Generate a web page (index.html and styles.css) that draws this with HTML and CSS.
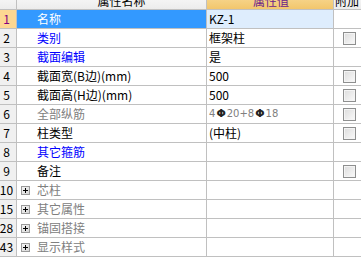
FILE: index.html
```html
<!DOCTYPE html>
<html lang="zh-CN">

<head>
    <meta charset="UTF-8">
    <title>属性编辑</title>
    <link rel="stylesheet" href="styles.css">
</head>

<body>
    <div class="grid">
        <div class="row head">
            <div class="cell num"></div>
            <div class="cell name">属性名称</div>
            <div class="cell value">属性值</div>
            <div class="cell extra">附加</div>
        </div>

        <div class="row current">
            <div class="cell num">1</div>
            <div class="cell name">名称</div>
            <div class="cell value">KZ-1</div>
            <div class="cell extra"></div>
        </div>
        <div class="row">
            <div class="cell num">2</div>
            <div class="cell name blue">类别</div>
            <div class="cell value">框架柱</div>
            <div class="cell extra"><span class="check"></span></div>
        </div>
        <div class="row">
            <div class="cell num">3</div>
            <div class="cell name blue">截面编辑</div>
            <div class="cell value">是</div>
            <div class="cell extra"></div>
        </div>
        <div class="row">
            <div class="cell num">4</div>
            <div class="cell name">截面宽(B边)(mm)</div>
            <div class="cell value">500</div>
            <div class="cell extra"><span class="check"></span></div>
        </div>
        <div class="row">
            <div class="cell num">5</div>
            <div class="cell name">截面高(H边)(mm)</div>
            <div class="cell value">500</div>
            <div class="cell extra"><span class="check"></span></div>
        </div>
        <div class="row">
            <div class="cell num">6</div>
            <div class="cell name gray">全部纵筋</div>
            <div class="cell value rebar">4<b>Φ</b>20+8<b>Φ</b>18</div>
            <div class="cell extra"><span class="check"></span></div>
        </div>
        <div class="row">
            <div class="cell num">7</div>
            <div class="cell name">柱类型</div>
            <div class="cell value">(中柱)</div>
            <div class="cell extra"><span class="check"></span></div>
        </div>
        <div class="row">
            <div class="cell num">8</div>
            <div class="cell name blue">其它箍筋</div>
            <div class="cell value"></div>
            <div class="cell extra"></div>
        </div>
        <div class="row">
            <div class="cell num">9</div>
            <div class="cell name">备注</div>
            <div class="cell value"></div>
            <div class="cell extra"><span class="check"></span></div>
        </div>

        <!-- collapsed groups -->
        <div class="row group">
            <div class="cell num">10</div>
            <div class="cell name gray"><span class="plus"></span>芯柱</div>
            <div class="cell value"></div>
            <div class="cell extra"></div>
        </div>
        <div class="row group">
            <div class="cell num">15</div>
            <div class="cell name gray"><span class="plus"></span>其它属性</div>
            <div class="cell value"></div>
            <div class="cell extra"></div>
        </div>
        <div class="row group">
            <div class="cell num">28</div>
            <div class="cell name gray"><span class="plus"></span>锚固搭接</div>
            <div class="cell value"></div>
            <div class="cell extra"></div>
        </div>
        <div class="row group">
            <div class="cell num">43</div>
            <div class="cell name gray"><span class="plus"></span>显示样式</div>
            <div class="cell value"></div>
            <div class="cell extra"></div>
        </div>
    </div>
</body>

</html>
```

FILE: styles.css
```css
body {
    margin: 0;
    background: #fff;
    font-family: "Noto Sans CJK SC", "DejaVu Sans", sans-serif;
    font-size: 12px;
    color: #000;
    overflow: hidden;
}

.grid {
    width: 380px;
}

.row {
    display: grid;
    grid-template-columns: 17px 190px 127px 46px;
    height: 19px;
}

.cell {
    box-sizing: border-box;
    display: flex;
    align-items: center;
    border-right: 1px solid #c0c0c0;
    border-bottom: 1px solid #c0c0c0;
    white-space: nowrap;
    overflow: hidden;
    line-height: 18px;
}

/* header row, top half scrolled out of view */
.head {
    height: 22px;
    margin-top: -12px;
}

.head .cell {
    justify-content: center;
    align-items: flex-end;
    line-height: 16px;
    background: linear-gradient(#ffffff, #ececec);
}

.head .value {
    background: linear-gradient(#fbe3a8, #f2c66c);
    color: #6a1b8a;
}

.head .extra {
    justify-content: flex-start;
    padding-left: 1px;
}

.num {
    background: #f0f0f0;
    justify-content: center;
    padding-right: 3px;
}

.name {
    padding-left: 20px;
}

.value {
    padding-left: 2px;
}

.extra {
    padding-left: 9px;
    border-right: none;
}

.blue {
    color: #0000ff;
}

.gray {
    color: #808080;
}

.current .num {
    background: #fdd792;
    color: #800080;
}

.current .name {
    background: #3399ff;
    color: #fff;
}

.current .value {
    background: #deedfd;
}

.rebar {
    font-family: "DejaVu Sans", sans-serif;
    font-size: 10px;
    color: #808080;
}

.rebar b {
    color: #222;
    font-size: 11px;
    margin: 0 1px;
}

.check {
    width: 13px;
    height: 13px;
    box-sizing: border-box;
    border: 1px solid #8e8f8f;
    background: linear-gradient(135deg, #dcdcdc, #fafafa);
    box-shadow: inset 0 0 0 1px #f4f4f4;
}

.group .name {
    padding-left: 4px;
}

.plus {
    position: relative;
    width: 9px;
    height: 9px;
    box-sizing: border-box;
    margin-right: 7px;
    border: 1px solid #9a9a9a;
    background: linear-gradient(135deg, #f4f4f4, #d8d8d8);
}

.plus::before,
.plus::after {
    content: "";
    position: absolute;
    background: #000;
}

.plus::before {
    left: 1px;
    top: 3px;
    width: 5px;
    height: 1px;
}

.plus::after {
    left: 3px;
    top: 1px;
    width: 1px;
    height: 5px;
}
```
